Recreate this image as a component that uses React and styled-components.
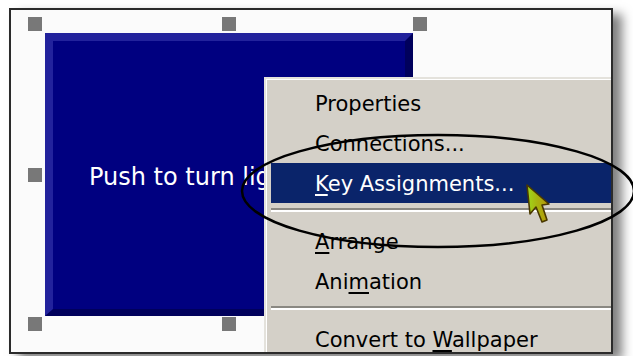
import React from "react";
import styled, {createGlobalStyle} from "styled-components";

const GlobalStyle = createGlobalStyle`
  html, body {
    margin: 0;
    padding: 0;
    background: #ffffff;
  }
`;

const Page = styled.div`
  position: relative;
  width: 633px;
  height: 356px;
  box-sizing: border-box;
  padding: 8px 0 0 9px;
  overflow: hidden;
  background: #ffffff;
`;

const Frame = styled.div`
  position: relative;
  width: 604px;
  height: 346px;
  box-sizing: border-box;
  border: 2px solid #2b2b2b;
  background: #fbfbfb;
  overflow: hidden;
  box-shadow: 9px 6px 10px rgba(0, 0, 0, 0.5);
`;

// selected control on the design canvas: handles around the button
const Selection = styled.div`
  position: absolute;
  left: 17px;
  top: 7px;
  display: grid;
  grid-template-columns: 17px 368px 14px;
  grid-template-rows: 16px 283px 15px;
`;

const PushButton = styled.div`
  grid-row: 2;
  grid-column: 2;
  box-sizing: border-box;
  border-style: solid;
  border-width: 8px 8px 7px 8px;
  border-color: #22229c #00005c #00005c #22229c;
  background: #000080;
  display: flex;
  align-items: center;
  padding: 4px 0 0 36px;
  color: #ffffff;
  font-family: "DejaVu Sans", Tahoma, sans-serif;
  font-size: 24px;
  white-space: nowrap;
  overflow: hidden;
`;

const Handle = styled.div`
  grid-row: ${(p) => p.row};
  grid-column: ${(p) => p.col};
  width: 14px;
  height: 14px;
  background: #787878;
  justify-self: ${(p) => (p.col === 2 ? "center" : "start")};
  align-self: ${(p) => (p.row === 2 ? "center" : p.row === 3 ? "end" : "start")};
`;

const Menu = styled.div`
  position: absolute;
  left: 253px;
  top: 67px;
  width: 380px;
  box-sizing: border-box;
  padding: 4px 0 4px 5px;
  background: #d4d0c8;
  border-left: 2px solid #e4e2dc;
  border-top: 2px solid #e4e2dc;
  box-shadow: inset 1px 1px 0 #ffffff;
  font-family: "DejaVu Sans", Tahoma, sans-serif;
  font-size: 21px;
  display: flex;
  flex-direction: column;
`;

const Item = styled.div`
  height: 40px;
  display: flex;
  align-items: center;
  padding: 2px 0 0 44px;
  box-sizing: border-box;
  white-space: pre;
  color: ${(p) => (p.active ? "#ffffff" : "#000000")};
  background: ${(p) => (p.active ? "#0a246a" : "transparent")};
`;

const Label = styled.span`
  white-space: pre;
`;

const Key = styled.span`
  text-decoration: underline;
  text-underline-offset: 3px;
`;

const Separator = styled.div`
  margin: 5px 0 9px;
  border-top: 2px solid #8a8882;
  border-bottom: 2px solid #ffffff;
`;

const Overlay = styled.svg`
  position: absolute;
  left: 0;
  top: 0;
  pointer-events: none;
`;

const Cursor = () => (
  <g>
    <defs>
      <linearGradient id="cur" x1="0" y1="0" x2="1" y2="0">
        <stop offset="0" stopColor="#9ed81c" />
        <stop offset="0.45" stopColor="#a8b410" />
        <stop offset="1" stopColor="#b8960a" />
      </linearGradient>
    </defs>
    <polygon
      points="527,185 530,214 536,207 542,222 547,220 542,205 549,204"
      fill="url(#cur)"
      stroke="#4a3800"
      strokeWidth="1.6"
      strokeLinejoin="round"
    />
  </g>
);

const App = () => {
  return (
    <>
      <GlobalStyle />
      <Page>
        <Frame>
          <Selection>
            <Handle row={1} col={1} />
            <Handle row={1} col={2} />
            <Handle row={1} col={3} />
            <Handle row={2} col={1} />
            <PushButton>Push to turn lights on</PushButton>
            <Handle row={2} col={3} />
            <Handle row={3} col={1} />
            <Handle row={3} col={2} />
            <Handle row={3} col={3} />
          </Selection>
          <Menu>
            <Item><Label>Properties</Label></Item>
            <Item><Label>Connections...</Label></Item>
            <Item active>
              <Label><Key>K</Key>ey Assignments...</Label>
            </Item>
            <Separator />
            <Item>
              <Label><Key>A</Key>rrange</Label>
            </Item>
            <Item>
              <Label>Ani<Key>m</Key>ation</Label>
            </Item>
            <Separator />
            <Item>
              <Label>Convert to <Key>W</Key>allpaper</Label>
            </Item>
          </Menu>
        </Frame>
        <Overlay width="633" height="356" viewBox="0 0 633 356">
          <ellipse cx="438" cy="191" rx="196" ry="56" fill="none" stroke="#000" strokeWidth="2.5" />
          <Cursor />
        </Overlay>
      </Page>
    </>
  );
};

export default App;
